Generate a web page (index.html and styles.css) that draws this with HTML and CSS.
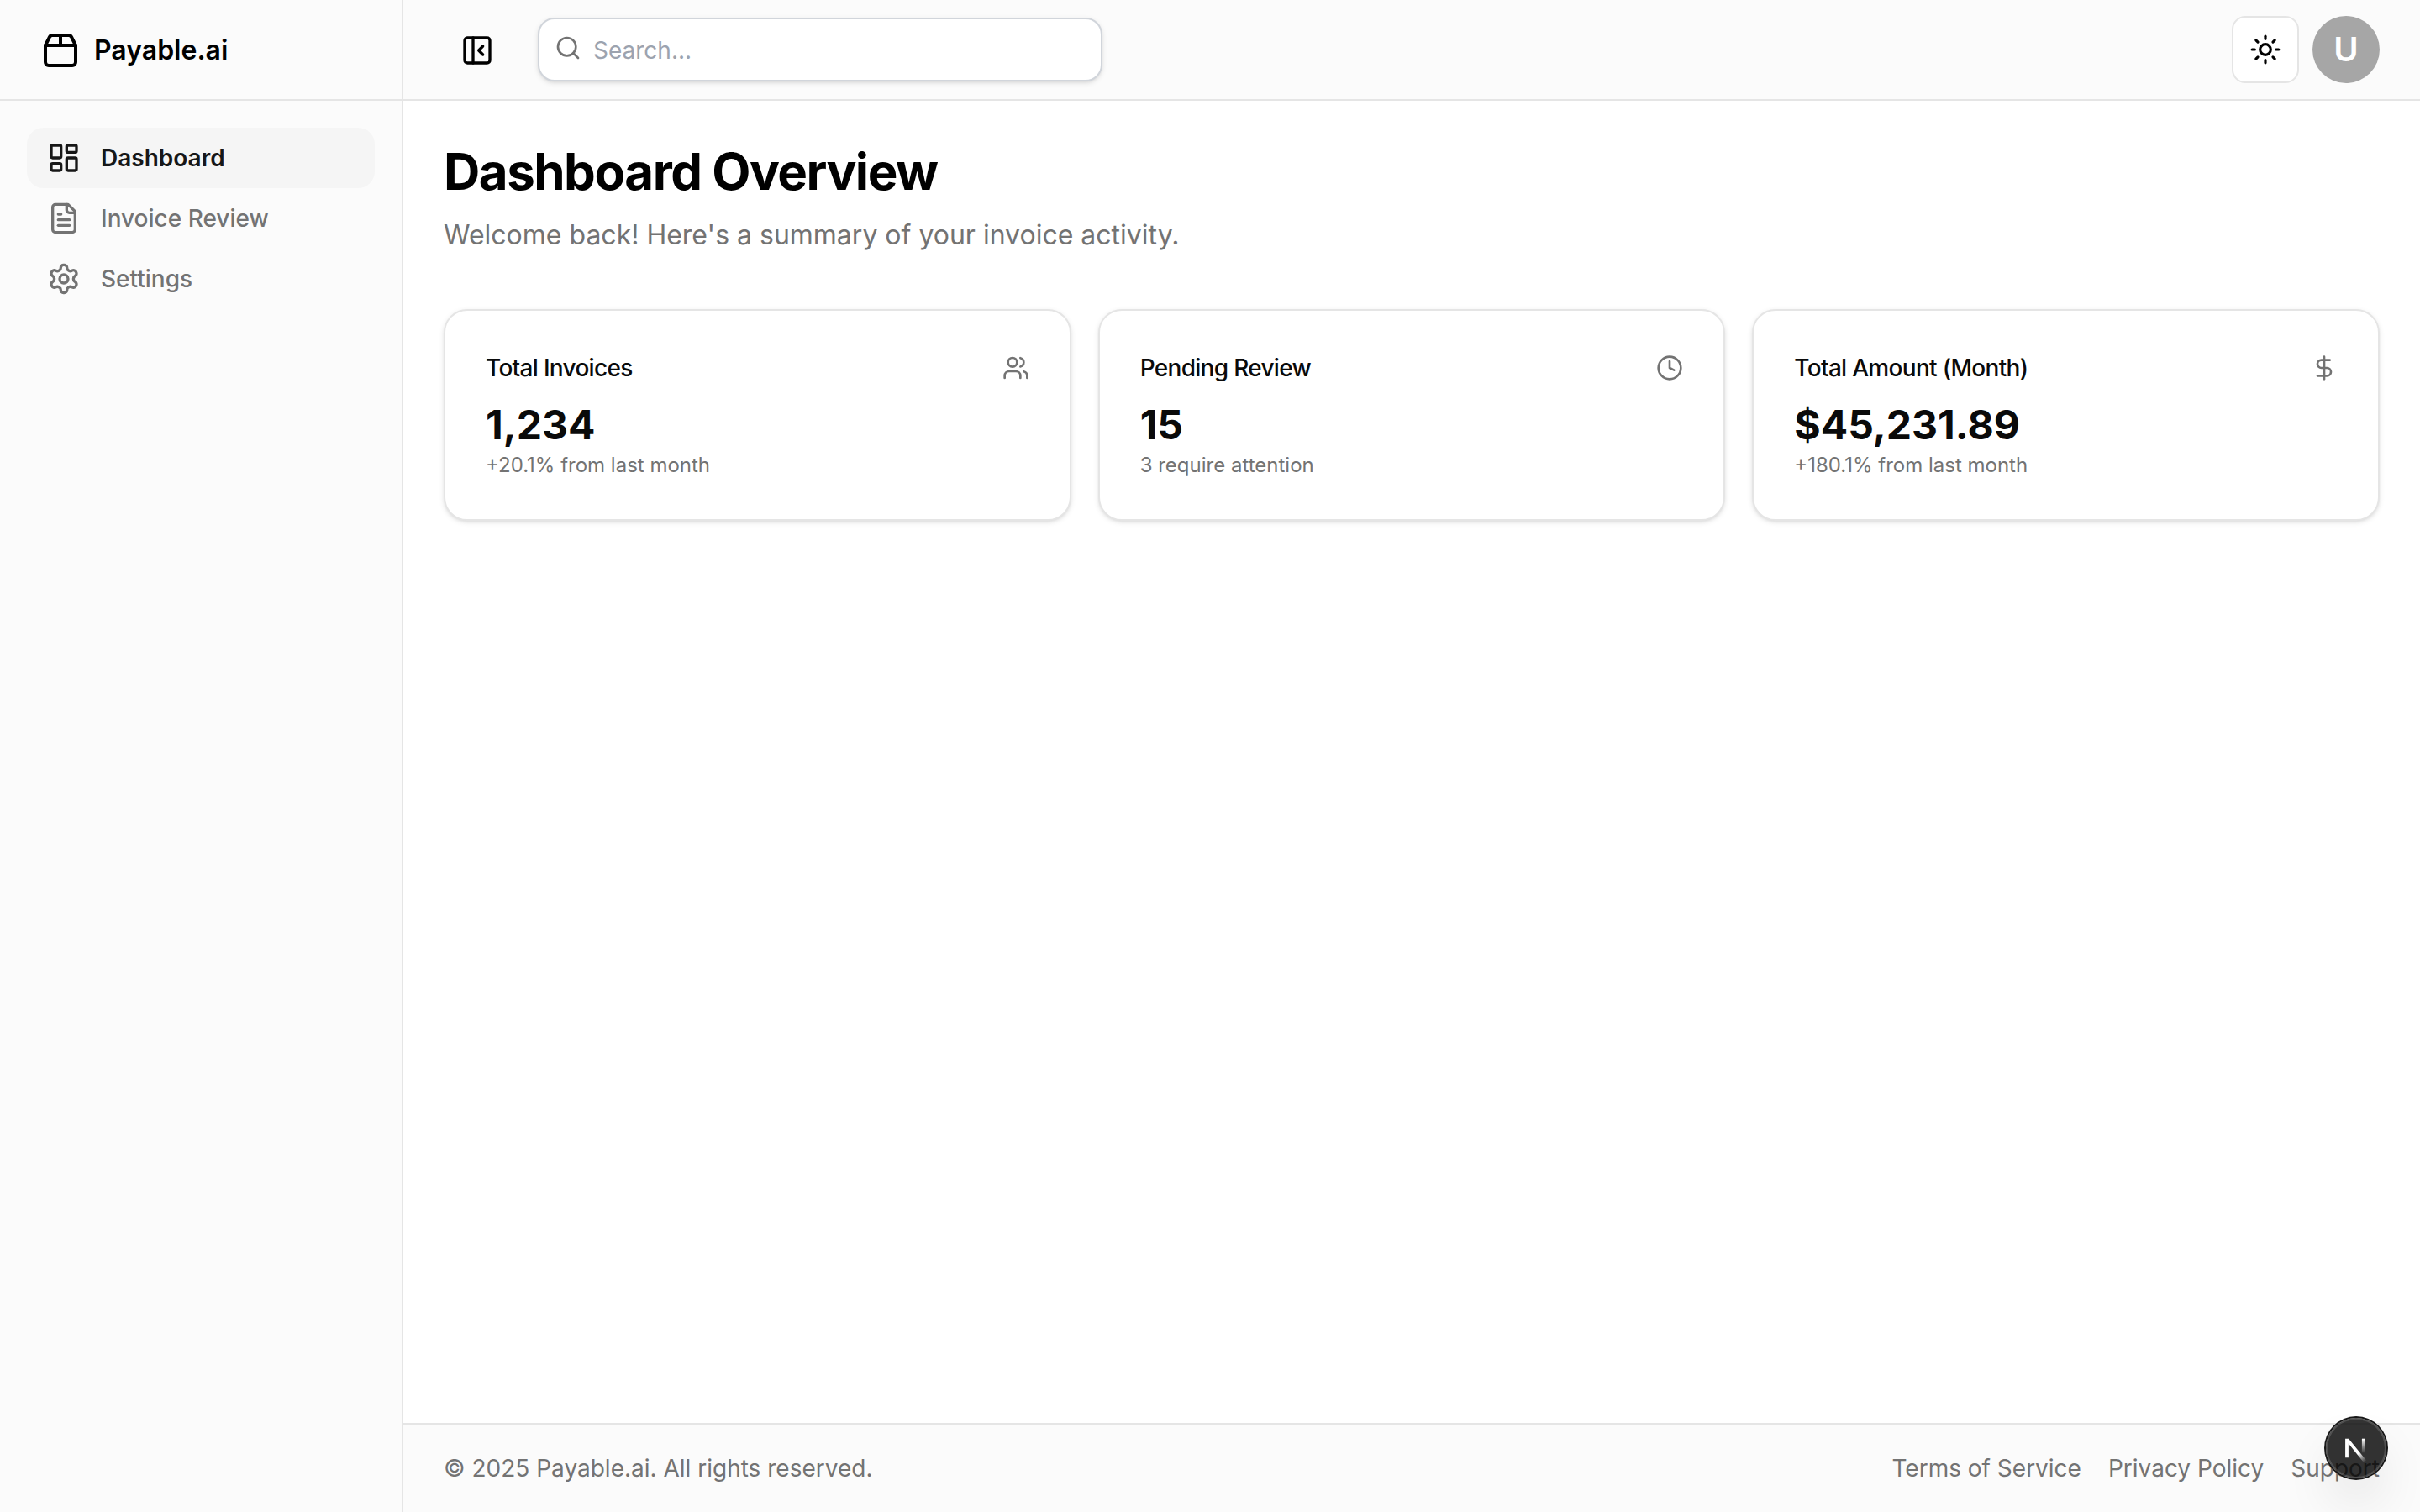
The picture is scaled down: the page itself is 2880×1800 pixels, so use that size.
FILE: index.html
```html
<!DOCTYPE html>
<html lang="en">
<head>
<meta charset="utf-8">
<meta name="viewport" content="width=device-width, initial-scale=1">
<title>Payable.ai</title>
<link rel="stylesheet" href="styles.css">
</head>
<body>
<div class="app">
  <aside class="sidebar">
    <a class="brand" href="#">
      <svg class="icon icon-xl" viewBox="0 0 24 24" aria-hidden="true"><path d="M3 9h18v10a2 2 0 0 1-2 2H5a2 2 0 0 1-2-2V9Z"/><path d="m3 9 2.45-4.9A2 2 0 0 1 7.24 3h9.52a2 2 0 0 1 1.8 1.1L21 9"/><path d="M12 3v6"/></svg>
      <span>Payable.ai</span>
    </a>
    <nav class="nav" aria-label="Main">
      <a class="nav-link active" href="#" aria-current="page">
        <svg class="icon icon-lg" viewBox="0 0 24 24" aria-hidden="true"><rect width="7" height="9" x="3" y="3" rx="1"/><rect width="7" height="5" x="14" y="3" rx="1"/><rect width="7" height="9" x="14" y="12" rx="1"/><rect width="7" height="5" x="3" y="16" rx="1"/></svg>
        Dashboard
      </a>
      <a class="nav-link" href="#">
        <svg class="icon icon-lg" viewBox="0 0 24 24" aria-hidden="true"><path d="M15 2H6a2 2 0 0 0-2 2v16a2 2 0 0 0 2 2h12a2 2 0 0 0 2-2V7Z"/><path d="M14 2v4a2 2 0 0 0 2 2h4"/><path d="M10 9H8"/><path d="M16 13H8"/><path d="M16 17H8"/></svg>
        Invoice Review
      </a>
      <a class="nav-link" href="#">
        <svg class="icon icon-lg" viewBox="0 0 24 24" aria-hidden="true"><path d="M12.22 2h-.44a2 2 0 0 0-2 2v.18a2 2 0 0 1-1 1.73l-.43.25a2 2 0 0 1-2 0l-.15-.08a2 2 0 0 0-2.73.73l-.22.38a2 2 0 0 0 .73 2.73l.15.1a2 2 0 0 1 1 1.72v.51a2 2 0 0 1-1 1.74l-.15.09a2 2 0 0 0-.73 2.73l.22.38a2 2 0 0 0 2.73.73l.15-.08a2 2 0 0 1 2 0l.43.25a2 2 0 0 1 1 1.73V20a2 2 0 0 0 2 2h.44a2 2 0 0 0 2-2v-.18a2 2 0 0 1 1-1.73l.43-.25a2 2 0 0 1 2 0l.15.08a2 2 0 0 0 2.73-.73l.22-.39a2 2 0 0 0-.73-2.73l-.15-.08a2 2 0 0 1-1-1.74v-.5a2 2 0 0 1 1-1.74l.15-.09a2 2 0 0 0 .73-2.73l-.22-.38a2 2 0 0 0-2.73-.73l-.15.08a2 2 0 0 1-2 0l-.43-.25a2 2 0 0 1-1-1.73V4a2 2 0 0 0-2-2z"/><circle cx="12" cy="12" r="3"/></svg>
        Settings
      </a>
    </nav>
  </aside>

  <div class="page">
    <header class="topbar">
      <button class="toggle" type="button" aria-label="Collapse sidebar">
        <svg class="icon icon-lg" viewBox="0 0 24 24" aria-hidden="true"><rect width="18" height="18" x="3" y="3" rx="2"/><path d="M9 3v18"/><path d="m16 15-3-3 3-3"/></svg>
      </button>
      <form class="search" role="search">
        <svg class="icon icon-md search-icon" viewBox="0 0 24 24" aria-hidden="true"><circle cx="11" cy="11" r="8"/><path d="m21 21-4.3-4.3"/></svg>
        <input class="search-input" type="search" placeholder="Search..." aria-label="Search">
      </form>
      <div class="actions">
        <button class="theme" type="button" aria-label="Toggle theme">
          <svg class="icon icon-theme" viewBox="0 0 24 24" aria-hidden="true"><circle cx="12" cy="12" r="4"/><path d="M12 2v2"/><path d="M12 20v2"/><path d="m4.93 4.93 1.41 1.41"/><path d="m17.66 17.66 1.41 1.41"/><path d="M2 12h2"/><path d="M20 12h2"/><path d="m6.34 17.66-1.41 1.41"/><path d="m19.07 4.93-1.41 1.41"/></svg>
        </button>
        <button class="avatar" type="button" aria-label="User menu">U</button>
      </div>
    </header>

    <main class="content">
      <div class="intro">
        <h1 class="title">Dashboard Overview</h1>
        <p class="subtitle">Welcome back! Here's a summary of your invoice activity.</p>
      </div>
      <div class="cards">
        <section class="card">
          <div class="card-head">
            <h2 class="card-title">Total Invoices</h2>
            <svg class="icon icon-md" viewBox="0 0 24 24" aria-hidden="true"><path d="M16 21v-2a4 4 0 0 0-4-4H6a4 4 0 0 0-4 4v2"/><circle cx="9" cy="7" r="4"/><path d="M22 21v-2a4 4 0 0 0-3-3.87"/><path d="M16 3.13a4 4 0 0 1 0 7.75"/></svg>
          </div>
          <div class="card-value">1,234</div>
          <p class="card-note">+20.1% from last month</p>
        </section>
        <section class="card">
          <div class="card-head">
            <h2 class="card-title">Pending Review</h2>
            <svg class="icon icon-md" viewBox="0 0 24 24" aria-hidden="true"><circle cx="12" cy="12" r="10"/><path d="M12 6v6l4 2"/></svg>
          </div>
          <div class="card-value">15</div>
          <p class="card-note">3 require attention</p>
        </section>
        <section class="card">
          <div class="card-head">
            <h2 class="card-title">Total Amount (Month)</h2>
            <svg class="icon icon-md" viewBox="0 0 24 24" aria-hidden="true"><path d="M12 2v20"/><path d="M17 5H9.5a3.5 3.5 0 0 0 0 7h5a3.5 3.5 0 0 1 0 7H6"/></svg>
          </div>
          <div class="card-value">$45,231.89</div>
          <p class="card-note">+180.1% from last month</p>
        </section>
      </div>
    </main>

    <footer class="footer">
      <span>© 2025 Payable.ai. All rights reserved.</span>
      <nav class="footer-links" aria-label="Footer">
        <a href="#">Terms of Service</a>
        <a href="#">Privacy Policy</a>
        <a href="#">Support</a>
      </nav>
    </footer>
  </div>
</div>

<button class="devtools" type="button" aria-label="Open Next.js Dev Tools">
  <svg class="devtools-mark" viewBox="0 0 72 72" fill="none" aria-hidden="true">
    <defs>
      <linearGradient id="stem" gradientUnits="userSpaceOnUse" x1="0" y1="25" x2="0" y2="42"><stop stop-color="#fff"/><stop offset="1" stop-color="#fff" stop-opacity="0"/></linearGradient>
      <linearGradient id="slash" gradientUnits="userSpaceOnUse" x1="39" y1="42" x2="47" y2="52"><stop stop-color="#fff"/><stop offset="1" stop-color="#fff" stop-opacity="0"/></linearGradient>
    </defs>
    <path d="M25 47.3V26.6h1.2L47.5 53" stroke="url(#slash)" stroke-width="3.8"/>
    <path d="M44.8 24.7V43" stroke="url(#stem)" stroke-width="3.8"/>
  </svg>
</button>
</body>
</html>
```
FILE: styles.css
```css
:root {
  --background: #ffffff;
  --surface: #fbfbfb;
  --foreground: #000000;
  --card-foreground: #0a0a0a;
  --muted: #737373;
  --accent: #f5f5f5;
  --border: #e5e5e5;
  --radius: 20px;
}

*, *::before, *::after { box-sizing: border-box; }

body {
  margin: 0;
  background: var(--background);
  color: var(--foreground);
  font-family: Inter, "Liberation Sans", sans-serif;
  font-size: 28px;
  line-height: 40px;
  -webkit-font-smoothing: antialiased;
}

h1, h2, p { margin: 0; }
a { color: inherit; text-decoration: none; }
button, input { font: inherit; color: inherit; margin: 0; }
button { display: flex; align-items: center; justify-content: center; padding: 0; border: 0; cursor: pointer; }

.icon {
  flex: none;
  fill: none;
  stroke: currentColor;
  stroke-width: 2;
  stroke-linecap: round;
  stroke-linejoin: round;
}
.icon-md { width: 32px; height: 32px; }
.icon-theme { width: 38px; height: 38px; }
.icon-lg { width: 40px; height: 40px; }
.icon-xl { width: 48px; height: 48px; }

.app {
  display: grid;
  grid-template-columns: 480px minmax(0, 1fr);
  min-height: 100vh;
}

/* Sidebar */
.sidebar { background: var(--surface); border-right: 2px solid var(--border); }
.brand {
  display: flex;
  align-items: center;
  gap: 16px;
  height: 120px;
  padding: 2px 48px 0;
  border-bottom: 2px solid var(--border);
  font-size: 32px;
  font-weight: 600;
}
.nav { display: flex; flex-direction: column; padding: 32px; }
.nav-link {
  display: flex;
  align-items: center;
  gap: 24px;
  padding: 16px 24px;
  border-radius: var(--radius);
  color: var(--muted);
  font-weight: 500;
}
.nav-link.active { background: var(--accent); color: #171717; font-weight: 600; }

/* Top bar */
.page { display: flex; flex-direction: column; }
.topbar {
  display: flex;
  align-items: center;
  gap: 32px;
  height: 120px;
  padding: 0 48px;
  background: var(--surface);
  border-bottom: 2px solid var(--border);
}
.toggle { width: 80px; height: 80px; padding-top: 2px; background: none; }
.search { position: relative; width: 672px; }
.search-icon { position: absolute; top: 20px; left: 20px; color: var(--muted); }
.search-input {
  display: block;
  width: 100%;
  height: 76px;
  padding: 18px 24px 16px 64px;
  border: 2px solid #d1d5db;
  border-radius: var(--radius);
  background: var(--background);
  box-shadow: 0 2px 6px rgba(0, 0, 0, .1), 0 2px 4px -2px rgba(0, 0, 0, .1);
  appearance: none;
  outline: 0;
}
.search-input::placeholder { color: #9ca3af; opacity: 1; }
.actions { display: flex; gap: 16px; margin-left: auto; }
.theme {
  width: 80px;
  height: 80px;
  border: 2px solid var(--border);
  border-radius: 16px;
  background: var(--background);
}
.avatar {
  width: 80px;
  height: 80px;
  border-radius: 50%;
  background: #a6a6a6;
  color: #ffffff;
  font-size: 40px;
  font-weight: 600;
}

/* Content */
.content { flex: 1; padding: 48px; }
.intro { display: grid; gap: 16px; margin-bottom: 64px; }
.title { font-size: 60px; line-height: 72px; font-weight: 700; letter-spacing: -0.025em; }
.subtitle { color: var(--muted); font-size: 32px; line-height: 48px; }
.cards { display: grid; grid-template-columns: repeat(3, minmax(0, 1fr)); gap: 32px; }
.card {
  padding: 48px;
  border: 2px solid var(--border);
  border-radius: 28px;
  background: var(--background);
  color: var(--card-foreground);
  box-shadow: 0 2px 6px rgba(0, 0, 0, .1), 0 2px 4px -2px rgba(0, 0, 0, .1);
}
.card-head { display: flex; align-items: center; justify-content: space-between; margin-bottom: 16px; }
.card-head .icon { color: var(--muted); }
.card-title { font-size: 28px; line-height: 40px; font-weight: 500; letter-spacing: -0.025em; }
.card-value { font-size: 48px; line-height: 64px; font-weight: 700; }
.card-note { color: var(--muted); font-size: 24px; line-height: 32px; }

/* Footer */
.footer {
  display: flex;
  align-items: center;
  justify-content: space-between;
  padding: 32px 48px;
  background: var(--surface);
  border-top: 2px solid var(--border);
  color: var(--muted);
}
.footer-links { display: flex; gap: 32px; }

/* Floating developer tools badge */
.devtools {
  position: fixed;
  right: 40px;
  bottom: 40px;
  width: 72px;
  height: 72px;
  border-radius: 50%;
  background: rgba(0, 0, 0, .8);
  box-shadow: 0 0 0 2px #171717, inset 0 0 0 2px rgba(255, 255, 255, .14), 0 32px 64px -16px rgba(0, 0, 0, .24);
}
.devtools-mark { width: 72px; height: 72px; }
```
